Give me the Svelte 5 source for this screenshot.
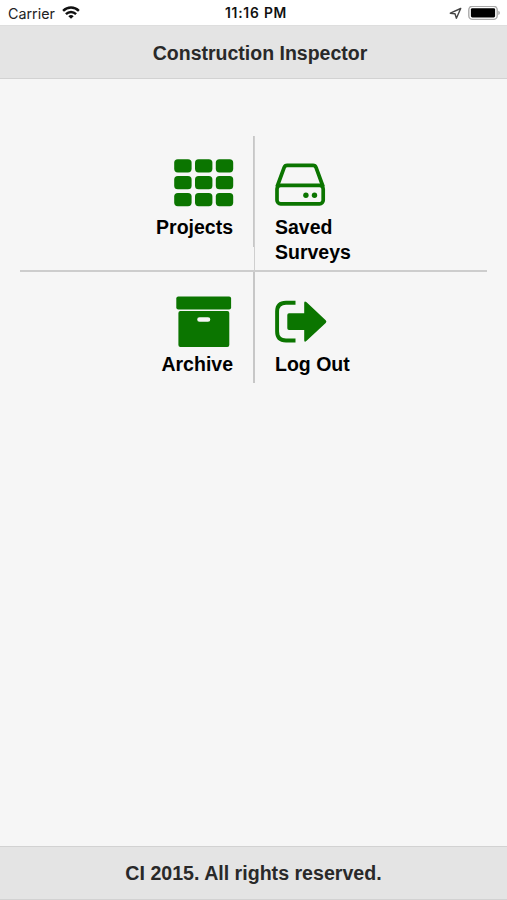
<script>
  const title = 'Construction Inspector';
  const xs = [0.2, 21, 41.8];
  const ys = [0.2, 17.1, 34];
</script>

<div class="screen">
  <div class="status">
    <div class="side">
      <span class="carrier">Carrier</span>
      <svg class="wifi" width="18" height="13" viewBox="0 0 18 13" fill="none" stroke="#111" stroke-width="2.4">
        <path d="M1.1 4.9C5.6.4 12.4.4 16.9 4.9" />
        <path d="M3.9 8.1C6.8 5.2 11.2 5.2 14.1 8.1" />
        <path d="M9 12.8L6.3 10.2Q9 8 11.7 10.2Z" fill="#111" stroke="none" />
      </svg>
    </div>
    <span class="time">11:16 PM</span>
    <div class="side end">
      <svg class="locate" width="13" height="13" viewBox="0 0 13 13" fill="none" stroke="#444" stroke-width="1.4" stroke-linejoin="round">
        <path d="M11.7 1.5L1.3 6.2L6 6.8L7.4 11.2Z" />
      </svg>
      <svg width="33" height="15" viewBox="0 0 33 15">
        <rect x="0.8" y="0.2" width="28.4" height="13.2" rx="3.6" fill="#fff" stroke="#a9a9a9" stroke-width="1.4" />
        <rect x="2.9" y="2.2" width="24.2" height="9.2" rx="1.4" fill="#000" />
        <path d="M30.4 4.8Q31.8 5.3 31.8 6.9T30.4 9Z" fill="#999" />
      </svg>
    </div>
  </div>

  <header><h1>{title}</h1></header>

  <main>
    <div class="row top">
      <div class="cell left">
        <svg width="60" height="48" viewBox="0 0 60 48" fill="#0b7500">
          {#each ys as y}
            {#each xs as x}
              <rect {x} {y} width="17.4" height="13.2" rx="3.6" />
            {/each}
          {/each}
        </svg>
        <span class="projects">Projects</span>
      </div>
      <div class="cell right">
        <svg width="52" height="48" viewBox="0 0 52 48" fill="none" stroke="#0b7500" stroke-width="3.7" stroke-linejoin="round">
          <path d="M2 28L9.1 8.6Q9.9 6.4 12.2 6.4H38Q40.3 6.4 41.1 8.6L48.2 28" />
          <rect x="2" y="26.4" width="46.2" height="18.4" rx="3.6" />
          <g fill="#0b7500" stroke="none">
            <circle cx="30.9" cy="36.3" r="2.7" />
            <circle cx="39.5" cy="36.3" r="2.7" />
          </g>
        </svg>
        <span>Saved<br />Surveys</span>
      </div>
    </div>
    <div class="row bottom">
      <div class="cell left">
        <svg width="60" height="52" viewBox="0 0 60 52" fill="#0b7500">
          <rect x="2.3" y="0.4" width="54.8" height="13" rx="2" />
          <path fill-rule="evenodd" d="M6.4 15H53.3Q55.3 15 55.3 17V49Q55.3 51 53.3 51H6.4Q4.4 51 4.4 49V17Q4.4 15 6.4 15ZM25.5 21.2A2.3 2.3 0 0 0 25.5 25.8H34A2.3 2.3 0 0 0 34 21.2Z" />
        </svg>
        <span class="archive">Archive</span>
      </div>
      <div class="cell right">
        <svg width="53" height="52" viewBox="0 0 53 52">
          <path d="M20.5 6.7H11Q2.1 6.7 2.1 15.6V35.6Q2.1 44.5 11 44.5H20.5" fill="none" stroke="#0b7500" stroke-width="3.9" stroke-linecap="butt" />
          <path d="M14 17.3H29.2V7Q29.2 4.3 31.6 6.3L50.7 24.3Q52.1 25.6 50.7 26.9L31.6 44.8Q29.2 46.8 29.2 44.1V34H14Q12.3 34 12.3 32.3V19Q12.3 17.3 14 17.3Z" fill="#0b7500" />
        </svg>
        <span>Log Out</span>
      </div>
    </div>
  </main>

  <footer>CI 2015. All rights reserved.</footer>
</div>

<style>
  :global(body) {
    margin: 0;
  }
  .screen {
    width: 507px;
    height: 900px;
    display: flex;
    flex-direction: column;
    background: #f6f6f6;
    font-family: "Liberation Sans", Arial, sans-serif;
    overflow: hidden;
  }
  svg {
    display: block;
    flex: none;
  }
  .status {
    height: 25px;
    display: flex;
    background: #fff;
    color: #222;
    font: 14.3px/27px Inter, sans-serif;
    white-space: nowrap;
  }
  .side {
    flex: 1;
    display: flex;
    padding: 0 6px 0 8px;
  }
  .wifi {
    margin: 6px 0 0 7px;
  }
  .time {
    font-size: 13.8px;
    font-weight: 600;
    letter-spacing: 0.8px;
    color: #111;
    padding-left: 5px;
  }
  .end {
    justify-content: flex-end;
    align-items: flex-start;
    gap: 6px;
    padding-top: 6px;
  }
  .locate {
    margin-top: 1px;
  }
  header,
  footer {
    box-sizing: border-box;
    height: 54px;
    flex: none;
    background: #e4e4e4;
    border-bottom: 1px solid #d2d2d2;
    color: #292929;
    font-size: 19.6px;
    font-weight: bold;
    line-height: 54px;
    text-align: center;
  }
  header {
    border-top: 1px solid #dedede;
    padding-left: 13px;
  }
  footer {
    border-top: 1px solid #d2d2d2;
    line-height: 53px;
  }
  h1 {
    margin: 0;
    font-size: 19.5px;
    line-height: inherit;
  }
  main {
    flex: 1;
    padding: 57px 20px 0;
  }
  .row {
    display: grid;
    grid-template-columns: 235px 232px;
  }
  .top {
    height: 134px;
    border-bottom: 2px solid #cdcdcd;
  }
  .cell {
    box-sizing: border-box;
    display: flex;
    flex-direction: column;
    color: #000;
    font-size: 19.5px;
    font-weight: bold;
    line-height: 24.5px;
  }
  .left {
    height: 111px;
    align-items: flex-end;
    padding-right: 19px;
    border-right: 2px solid #c7c7c7;
  }
  .right {
    padding-left: 20px;
  }
  .top .right {
    box-shadow: -1px 0 0 #cfcfcf;
  }
  .top .cell {
    padding-top: 23px;
  }
  .bottom .cell {
    padding-top: 24px;
  }
  .cell span {
    margin-top: 8px;
  }
  .bottom span {
    margin-top: 4px;
  }
  .projects,
  .archive {
    margin-right: 1px;
  }
</style>
